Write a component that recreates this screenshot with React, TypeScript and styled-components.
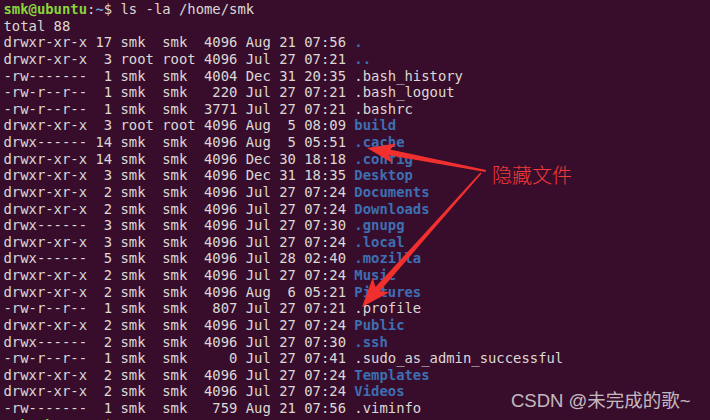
import React from "react";
import styled, { createGlobalStyle } from "styled-components";

const Global = createGlobalStyle`
  html, body { margin: 0; padding: 0; background: #380d2b; }
  #root { width: 710px; height: 420px; }
`;

const Screen = styled.div`
  position: relative;
  width: 710px;
  height: 420px;
  overflow: hidden;
  background: #380d2b;
`;

const Terminal = styled.pre`
  margin: 0;
  padding: 1px 0 0 3.5px;
  font-family: "DejaVu Sans Mono", "Liberation Mono", monospace;
  font-size: 13.88px;
  line-height: 16.625px;
  color: #dcd8d6;
  white-space: pre;
`;

const Line = styled.div`
  height: 16.625px;
`;

const Dir = styled.span`
  color: #3d6fb3;
  font-weight: bold;
`;

const User = styled.span`
  color: #86d63c;
  font-weight: bold;
`;

const Path = styled.span`
  color: #6f9ad6;
  font-weight: bold;
`;

const Overlay = styled.svg`
  position: absolute;
  left: 0;
  top: 0;
  pointer-events: none;
`;

const Label = styled.div`
  position: absolute;
  left: 492px;
  top: 160px;
  font-family: "Noto Sans CJK SC", sans-serif;
  font-size: 20px;
  font-weight: 300;
  color: #f23a3a;
`;

const Watermark = styled.div`
  position: absolute;
  left: 511px;
  top: 386px;
  font-family: "Liberation Sans", "Noto Sans CJK SC", sans-serif;
  font-size: 18.5px;
  color: rgba(235, 230, 232, 0.8);
`;

type Entry = [string, string, boolean];

const entries: Entry[] = [
  ["drwxr-xr-x 17 smk  smk  4096 Aug 21 07:56 ", ".", true],
  ["drwxr-xr-x  3 root root 4096 Jul 27 07:21 ", "..", true],
  ["-rw-------  1 smk  smk  4004 Dec 31 20:35 ", ".bash_history", false],
  ["-rw-r--r--  1 smk  smk   220 Jul 27 07:21 ", ".bash_logout", false],
  ["-rw-r--r--  1 smk  smk  3771 Jul 27 07:21 ", ".bashrc", false],
  ["drwxr-xr-x  3 root root 4096 Aug  5 08:09 ", "build", true],
  ["drwx------ 14 smk  smk  4096 Aug  5 05:51 ", ".cache", true],
  ["drwxr-xr-x 14 smk  smk  4096 Dec 30 18:18 ", ".config", true],
  ["drwxr-xr-x  3 smk  smk  4096 Dec 31 18:35 ", "Desktop", true],
  ["drwxr-xr-x  2 smk  smk  4096 Jul 27 07:24 ", "Documents", true],
  ["drwxr-xr-x  2 smk  smk  4096 Jul 27 07:24 ", "Downloads", true],
  ["drwx------  3 smk  smk  4096 Jul 27 07:30 ", ".gnupg", true],
  ["drwxr-xr-x  3 smk  smk  4096 Jul 27 07:24 ", ".local", true],
  ["drwx------  5 smk  smk  4096 Jul 28 02:40 ", ".mozilla", true],
  ["drwxr-xr-x  2 smk  smk  4096 Jul 27 07:24 ", "Music", true],
  ["drwxr-xr-x  2 smk  smk  4096 Aug  6 05:21 ", "Pictures", true],
  ["-rw-r--r--  1 smk  smk   807 Jul 27 07:21 ", ".profile", false],
  ["drwxr-xr-x  2 smk  smk  4096 Jul 27 07:24 ", "Public", true],
  ["drwx------  2 smk  smk  4096 Jul 27 07:30 ", ".ssh", true],
  ["-rw-r--r--  1 smk  smk     0 Jul 27 07:41 ", ".sudo_as_admin_successful", false],
  ["drwxr-xr-x  2 smk  smk  4096 Jul 27 07:24 ", "Templates", true],
  ["drwxr-xr-x  2 smk  smk  4096 Jul 27 07:24 ", "Videos", true],
  ["-rw-------  1 smk  smk   759 Aug 21 07:56 ", ".viminfo", false],
];

const Prompt: React.FC<{ cmd: string }> = ({ cmd }) => (
  <Line>
    <User>smk@ubuntu</User>:<Path>~</Path>$ {cmd}
  </Line>
);

export default function App() {
  return (
    <Screen>
      <Global />
      <Terminal>
        <Prompt cmd="ls -la /home/smk" />
        <Line>total 88</Line>
        {entries.map(([meta, name, dir], i) => (
          <Line key={i}>
            {meta}
            {dir ? <Dir>{name}</Dir> : name}
          </Line>
        ))}
        <Prompt cmd="" />
      </Terminal>
      <Overlay width="710" height="420" viewBox="0 0 710 420">
        <polygon
          fill="#f0302e"
          points="367,148 396.4,143.5 390.2,149.5 486,170 485.6,172 389,155.3 392.6,163.1"
        />
        <polygon
          fill="#f0302e"
          points="362,307 372.7,277.7 375.5,287 480.4,172.5 481.6,173.5 380,291 389.3,292.3"
        />
      </Overlay>
      <Label>隐藏文件</Label>
      <Watermark>CSDN @未完成的歌~</Watermark>
    </Screen>
  );
}
